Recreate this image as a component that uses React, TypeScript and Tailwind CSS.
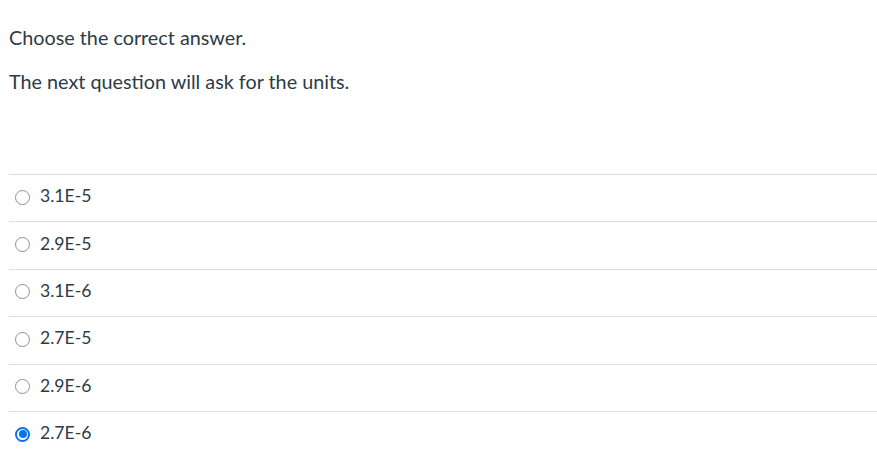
const OPTIONS = ["3.1E-5", "2.9E-5", "3.1E-6", "2.7E-5", "2.9E-6", "2.7E-6"];
const SELECTED = "2.7E-6";

function Radio({ checked }: { checked: boolean }) {
  if (checked) {
    return (
      <span className="flex h-[15px] w-[15px] items-center justify-center rounded-full border-2 border-[#0b72e7] bg-white">
        <span className="h-[8px] w-[8px] rounded-full bg-[#0b72e7]" />
      </span>
    );
  }
  return <span className="h-[15px] w-[15px] rounded-full border border-[#8f8f8f] bg-white" />;
}

export default function App() {
  return (
    <div className="min-h-screen bg-white font-['Lato','Liberation_Sans',sans-serif] text-[#2d3b45]">
      <div className="pl-[9px] pt-[22px]">
        <p className="text-[19.8px] leading-[30px]">Choose the correct answer.</p>
        <p className="mt-[14px] text-[19.8px] leading-[30px]">The next question will ask for the units.</p>
      </div>
      <div className="ml-[9px] mt-[78px]">
        {OPTIONS.map((opt) => (
          <label
            key={opt}
            className="flex h-[47.4px] items-center gap-[10px] border-t border-[#dcdfe2] pl-[6px] pb-[2px]"
          >
            <Radio checked={opt === SELECTED} />
            <span className="pb-[2px] text-[17.6px] leading-[26px]">{opt}</span>
          </label>
        ))}
      </div>
    </div>
  );
}
